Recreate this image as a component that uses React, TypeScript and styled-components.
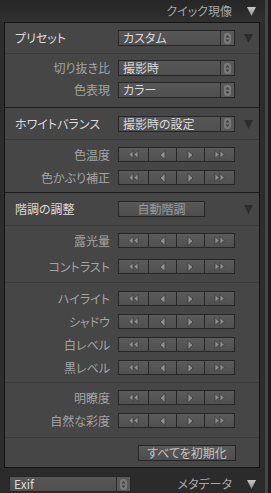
import React from "react";
import styled, { createGlobalStyle } from "styled-components";

const GlobalStyle = createGlobalStyle`
  body {
    margin: 0;
    background: #2b2b2b;
    font-family: "Noto Sans CJK JP", "Noto Sans", sans-serif;
    font-feature-settings: "palt";
  }
`;

const Frame = styled.div`
  display: flex;
  width: 271px;
  height: 493px;
  overflow: hidden;
`;

const Column = styled.div`
  width: 265px;
  display: flex;
  flex-direction: column;
  background: #2c2c2c;
`;

const RightEdge = styled.div`
  width: 6px;
  background: linear-gradient(to right, #454545 0, #454545 3px, #1b1b1b 3px);
`;

const TopBar = styled.div`
  height: 22px;
  display: flex;
  align-items: center;
  justify-content: flex-end;
  gap: 15px;
  padding-right: 9px;
  background: linear-gradient(#262626, #303030);
  color: #a6a6a6;
  font-size: 12px;
  line-height: 14px;
`;

const Panel = styled.div`
  margin: 0 5px 0 4px;
  border: 1px solid #141414;
  background: #464646;
`;

const Section = styled.div`
  & + & {
    border-top: 1px solid #1c1c1c;
  }
`;

const HeaderRow = styled.div<{ $h: number }>`
  height: ${(p) => p.$h}px;
  display: grid;
  grid-template-columns: 113px 117px 1fr;
  align-items: center;
  border-bottom: 1px solid #3a3a3a;
`;

const HeaderLabel = styled.div`
  padding-left: 10px;
  color: #dcdcdc;
  font-size: 12px;
  line-height: 14px;
  white-space: nowrap;
`;

const Group = styled.div<{ $pt: number; $pb: number; $gap?: number; $last?: boolean }>`
  display: flex;
  flex-direction: column;
  gap: ${(p) => p.$gap ?? 0}px;
  padding: ${(p) => p.$pt}px 0 ${(p) => p.$pb}px;
  border-bottom: ${(p) => (p.$last ? "none" : "1px solid #3a3a3a")};
`;

const Row = styled.div<{ $h: number }>`
  height: ${(p) => p.$h}px;
  display: grid;
  grid-template-columns: 113px 117px;
  align-items: center;
`;

const Label = styled.div`
  padding-right: 8px;
  text-align: right;
  color: #a4a4a4;
  font-size: 12px;
  line-height: 14px;
  white-space: nowrap;
`;

const SelectBox = styled.div<{ $w?: number }>`
  width: ${(p) => (p.$w ? `${p.$w}px` : "auto")};
  height: 16px;
  box-sizing: border-box;
  display: flex;
  border: 1px solid #262626;
  background: linear-gradient(#575757, #4f4f4f);
`;

const SelectText = styled.div`
  flex: 1;
  display: flex;
  align-items: center;
  padding-left: 4px;
  color: #dadada;
  font-size: 12px;
  line-height: 14px;
  white-space: nowrap;
`;

const Stepper = styled.div`
  width: 13px;
  display: flex;
  align-items: center;
  justify-content: center;
  border-left: 1px solid #2a2a2a;
  background: #595959;
`;

const Disclosure = styled.div`
  display: flex;
  justify-content: center;
  padding-left: 2px;
`;

const Segments = styled.div`
  height: 15px;
  box-sizing: border-box;
  display: grid;
  grid-template-columns: 30fr 28fr 28fr 30fr;
  border: 1px solid #262626;
  background: #262626;
  gap: 1px;
`;

const Segment = styled.div`
  display: flex;
  align-items: center;
  justify-content: center;
  background: linear-gradient(#5b5b5b, #505050);
`;

const Button = styled.div<{ $w: number; $dim?: boolean }>`
  width: ${(p) => p.$w}px;
  height: 16px;
  box-sizing: border-box;
  display: flex;
  align-items: center;
  justify-content: center;
  border: 1px solid #262626;
  background: linear-gradient(#595959, #4d4d4d);
  color: ${(p) => (p.$dim ? "#9a9a9a" : "#c4c4c4")};
  font-size: 12px;
  line-height: 14px;
  white-space: nowrap;
`;

const ResetArea = styled.div`
  height: 29px;
  box-sizing: border-box;
  padding: 7px 23px 0 0;
  display: flex;
  justify-content: flex-end;
`;

const BottomBar = styled.div`
  flex: 1;
  display: flex;
  align-items: flex-start;
  justify-content: space-between;
  padding: 8px 9px 0 9px;
  background: #2b2b2b;
`;

const BottomTitle = styled.div`
  display: flex;
  align-items: center;
  gap: 15px;
  padding-top: 1px;
  color: #a6a6a6;
  font-size: 12px;
  line-height: 14px;
`;

const StepperIcon = () => (
  <svg width="7" height="11" viewBox="0 0 7 11">
    <rect x="0" y="0" width="7" height="11" rx="3" fill="#7a7a7a" />
    <polygon points="3.5,2 5.5,4.5 1.5,4.5" fill="#3a3a3a" />
    <polygon points="3.5,9 5.5,6.5 1.5,6.5" fill="#3a3a3a" />
  </svg>
);

const DownTriangle = ({ light }: { light?: boolean }) => (
  <svg width="9" height="10" viewBox="0 0 9 10">
    <defs>
      <linearGradient id="tri-light" x1="0" y1="0" x2="0" y2="1">
        <stop offset="0" stopColor="#c8c8c8" />
        <stop offset="1" stopColor="#8e8e8e" />
      </linearGradient>
    </defs>
    <polygon
      points="0,1 9,1 4.5,10"
      fill={light ? "url(#tri-light)" : "#2c2c2c"}
    />
  </svg>
);

// left / right pointing step arrows, single or double
const Arrow = ({ dir, double }: { dir: "l" | "r"; double?: boolean }) => {
  const w = double ? 4 : 5;
  const h = double ? 9 : 10;
  const tri = (x: number) =>
    dir === "l"
      ? `${x + w},0.5 ${x + w},${h - 0.5} ${x},${h / 2}`
      : `${x},0.5 ${x},${h - 0.5} ${x + w},${h / 2}`;
  const total = double ? 11 : 7;
  return (
    <svg width={total} height={h} viewBox={`0 0 ${total} ${h}`}>
      <polygon points={tri(1)} fill="#929292" stroke="#3a3a3a" strokeWidth="0.8" />
      {double && (
        <polygon points={tri(6)} fill="#929292" stroke="#3a3a3a" strokeWidth="0.8" />
      )}
    </svg>
  );
};

const Select = ({ value, width }: { value: string; width?: number }) => (
  <SelectBox $w={width}>
    <SelectText>{value}</SelectText>
    <Stepper>
      <StepperIcon />
    </Stepper>
  </SelectBox>
);

const Adjust = () => (
  <Segments>
    <Segment>
      <Arrow dir="l" double />
    </Segment>
    <Segment>
      <Arrow dir="l" />
    </Segment>
    <Segment>
      <Arrow dir="r" />
    </Segment>
    <Segment>
      <Arrow dir="r" double />
    </Segment>
  </Segments>
);

const AdjustRow = ({ label }: { label: string }) => (
  <Row $h={23}>
    <Label>{label}</Label>
    <Adjust />
  </Row>
);

export default function App() {
  return (
    <Frame>
      <GlobalStyle />
      <Column>
        <TopBar>
          <span>クイック現像</span>
          <DownTriangle light />
        </TopBar>
        <Panel>
          <Section>
            <HeaderRow $h={30}>
              <HeaderLabel>プリセット</HeaderLabel>
              <Select value="カスタム" />
              <Disclosure>
                <DownTriangle />
              </Disclosure>
            </HeaderRow>
            <Group $pt={3} $pb={6} $last>
              <Row $h={22}>
                <Label>切り抜き比</Label>
                <Select value="撮影時" />
              </Row>
              <Row $h={22}>
                <Label>色表現</Label>
                <Select value="カラー" />
              </Row>
            </Group>
          </Section>
          <Section>
            <HeaderRow $h={31}>
              <HeaderLabel>ホワイトバランス</HeaderLabel>
              <Select value="撮影時の設定" />
              <Disclosure>
                <DownTriangle />
              </Disclosure>
            </HeaderRow>
            <Group $pt={3} $pb={3} $last>
              <AdjustRow label="色温度" />
              <AdjustRow label="色かぶり補正" />
            </Group>
          </Section>
          <Section>
            <HeaderRow $h={32}>
              <HeaderLabel>階調の調整</HeaderLabel>
              <Button $w={87} $dim>
                自動階調
              </Button>
              <Disclosure>
                <DownTriangle />
              </Disclosure>
            </HeaderRow>
            <Group $pt={3} $pb={4} $gap={3}>
              <AdjustRow label="露光量" />
              <AdjustRow label="コントラスト" />
            </Group>
            <Group $pt={4} $pb={3}>
              <AdjustRow label="ハイライト" />
              <AdjustRow label="シャドウ" />
              <AdjustRow label="白レベル" />
              <AdjustRow label="黒レベル" />
            </Group>
            <Group $pt={3} $pb={5}>
              <AdjustRow label="明瞭度" />
              <AdjustRow label="自然な彩度" />
            </Group>
            <ResetArea>
              <Button $w={98}>すべてを初期化</Button>
            </ResetArea>
          </Section>
        </Panel>
        <BottomBar>
          <Select value="Exif" width={122} />
          <BottomTitle>
            <span>メタデータ</span>
            <DownTriangle light />
          </BottomTitle>
        </BottomBar>
      </Column>
      <RightEdge />
    </Frame>
  );
}
